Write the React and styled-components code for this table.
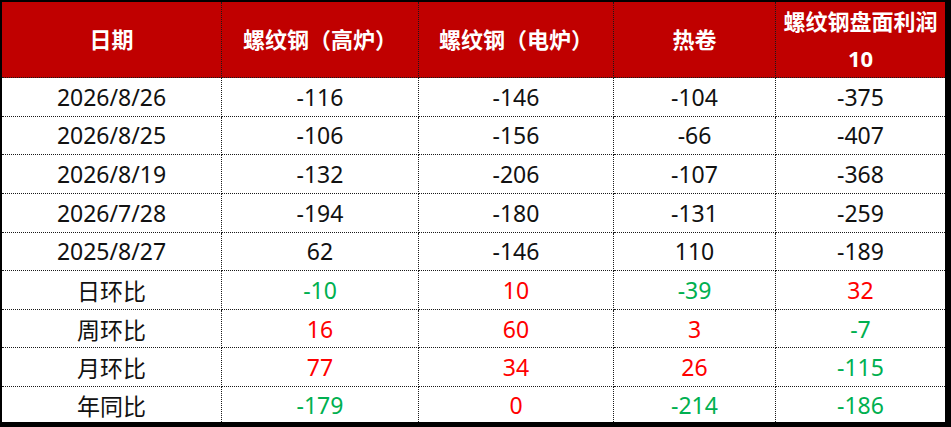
import styled, { createGlobalStyle } from "styled-components"

const GlobalStyle = createGlobalStyle`
    html, body {
        margin: 0;
        padding: 0;
        background: #000;
    }
`

const Frame = styled.div`
    width: 951px;
    height: 427px;
    box-sizing: border-box;
    padding: 2px 6px 5px 2px;
    background: #000;
`

const Table = styled.div`
    display: grid;
    grid-template-columns: 220px 197px 195px 162px 169px;
    grid-template-rows: 76px repeat(8, 38.625px) 35px;
    background: #fff;
    font-family: "Noto Sans", "Noto Sans CJK SC", sans-serif;
`

const Cell = styled.div`
    display: flex;
    align-items: center;
    justify-content: center;
    box-sizing: border-box;
    border-right: ${p => p.$lastCol ? "none" : "1px dotted #1a1a1a"};
    border-bottom: ${p => p.$lastRow ? "none" : "1px dotted #1a1a1a"};
    font-size: 23px;
    color: ${p => p.$tone === "up" ? "#ff0000" : p.$tone === "down" ? "#00b050" : "#111"};
    white-space: nowrap;
`

const HeadCell = styled(Cell)`
    flex-direction: column;
    background: #c00000;
    color: #fff;
    font-weight: 700;
    font-size: 22px;
    line-height: 37px;
    text-align: center;
`

const headers = [["日期"], ["螺纹钢（高炉）"], ["螺纹钢（电炉）"], ["热卷"], ["螺纹钢盘面利润", "10"]]

const rows = [
    ["2026/8/26", "-116", "-146", "-104", "-375"],
    ["2026/8/25", "-106", "-156", "-66", "-407"],
    ["2026/8/19", "-132", "-206", "-107", "-368"],
    ["2026/7/28", "-194", "-180", "-131", "-259"],
    ["2025/8/27", "62", "-146", "110", "-189"],
    ["日环比", "-10", "10", "-39", "32"],
    ["周环比", "16", "60", "3", "-7"],
    ["月环比", "77", "34", "26", "-115"],
    ["年同比", "-179", "0", "-214", "-186"],
]

// change rows get coloured: red for rise, green for fall
function toneOf(rowIndex, colIndex, value) {
    if (rowIndex < 5 || colIndex === 0) return "plain"
    return value.startsWith("-") ? "down" : "up"
}

export default function App() {
    return (
        <Frame>
            <GlobalStyle />
            <Table>
                {headers.map((lines, c) => (
                    <HeadCell key={"h" + c} $lastCol={c === 4}>
                        {lines.map(line => <span key={line}>{line}</span>)}
                    </HeadCell>
                ))}
                {rows.map((row, r) =>
                    row.map((value, c) => (
                        <Cell
                            key={r + "-" + c}
                            $lastCol={c === 4}
                            $lastRow={r === rows.length - 1}
                            $tone={toneOf(r, c, value)}
                        >
                            {value}
                        </Cell>
                    ))
                )}
            </Table>
        </Frame>
    )
}
